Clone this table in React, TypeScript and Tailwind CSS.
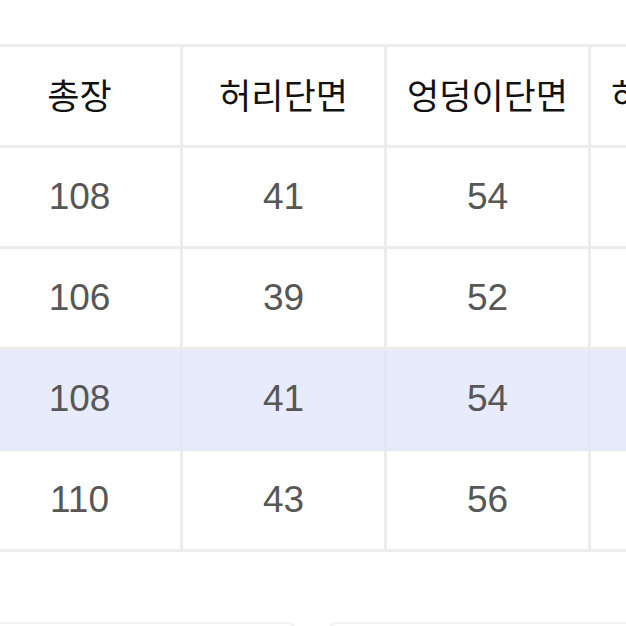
import React from 'react';

const headers = ['총장', '허리단면', '엉덩이단면', '허벅지단면'];

const rows = [
  { values: ['108', '41', '54', '33'], active: false },
  { values: ['106', '39', '52', '32'], active: false },
  { values: ['108', '41', '54', '33'], active: true },
  { values: ['110', '43', '56', '34'], active: false },
];

const App = () => {
  return (
    <div className="w-[626px] h-[626px] overflow-hidden bg-white pt-[44px]">
      {/* Size table */}
      <div className="ml-[-21px] w-max border-t-[3px] border-[#ececec]">
        <div className="flex border-b-[3px] border-[#ececec]">
          {headers.map((h) => (
            <div
              key={h}
              className="w-[204px] h-[98px] shrink-0 border-r-[3px] border-[#ececec] flex items-center justify-center pb-[4px] text-[35px] text-[#111111] whitespace-nowrap"
              style={{ fontFamily: '"Noto Sans CJK KR", sans-serif' }}
            >
              {h}
            </div>
          ))}
        </div>
        {rows.map((row, i) => (
          <div
            key={i}
            className={`flex border-b-[3px] ${row.active ? 'bg-[#e7ebfb] border-[#e5e9f6]' : 'border-[#ececec]'}`}
          >
            {row.values.map((v, j) => (
              <div
                key={j}
                className={`w-[204px] h-[98px] shrink-0 border-r-[3px] flex items-center justify-center text-[37px] text-[#575757] ${
                  row.active ? 'border-[#e1e5f4]' : 'border-[#ececec]'
                }`}
                style={{ fontFamily: '"Liberation Sans", Arial, sans-serif' }}
              >
                {v}
              </div>
            ))}
          </div>
        ))}
      </div>

      {/* Bottom buttons */}
      <div className="flex gap-[30px] mt-[70px] ml-[-20px]">
        <div className="w-[317px] h-[40px] shrink-0 rounded-t-[10px] border-2 border-[#f1f1f1]" />
        <div className="w-[317px] h-[40px] shrink-0 rounded-t-[10px] border-2 border-[#f1f1f1]" />
      </div>
    </div>
  );
};

export default App;
